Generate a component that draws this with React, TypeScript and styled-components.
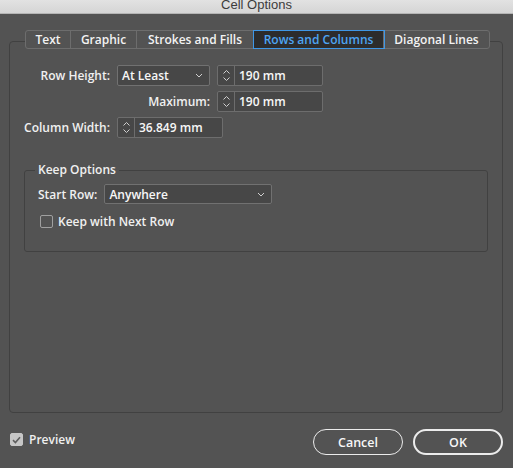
import React from "react";
import styled, { createGlobalStyle } from "styled-components";

const Global = createGlobalStyle`
  html, body { margin: 0; padding: 0; background: #535353; }
  body { font-family: "Open Sans", "Liberation Sans", sans-serif; font-size: 12px; color: #f2f2f2; }
  * { box-sizing: border-box; }
`;

const Dialog = styled.div`
  width: 513px;
  height: 468px;
  background: #535353;
  display: flex;
  flex-direction: column;
  overflow: hidden;
`;

const TitleBar = styled.div`
  height: 14px;
  background: linear-gradient(#e2e2e2, #d5d5d5);
  border-bottom: 1px solid #b5b5b5;
  display: flex;
  justify-content: center;
  overflow: hidden;
`;

const TitleText = styled.div`
  font-family: "Liberation Sans", sans-serif;
  font-size: 13px;
  line-height: 14px;
  color: #3c3c3c;
  margin-top: -2px;
`;

const Body = styled.div`
  padding: 16px 10px 0 9px;
  display: flex;
  flex-direction: column;
`;

const TabBar = styled.div`
  align-self: center;
  display: flex;
  height: 19px;
  border: 1px solid #6d6d6d;
  border-radius: 3px;
  background: #535353;
  position: relative;
  z-index: 1;
  margin-left: 3px;
`;

const Tab = styled.div<{ $w: number; $active?: boolean }>`
  width: ${(p) => p.$w}px;
  height: 17px;
  display: flex;
  align-items: center;
  justify-content: center;
  font-size: 12px;
  font-weight: 600;
  color: ${(p) => (p.$active ? "#4ea4f2" : "#f2f2f2")};
  background: ${(p) => (p.$active ? "#2c2c2c" : "transparent")};
  border-right: 1px solid #6d6d6d;
  box-shadow: ${(p) => (p.$active ? "0 0 0 1px #3f97e6" : "none")};
  &:last-child { border-right: none; }
`;

const Panel = styled.div`
  margin-top: -8px;
  height: 372px;
  border: 1px solid #414141;
  border-radius: 4px;
  padding: 23px 14px 0 14px;
  display: flex;
  flex-direction: column;
`;

const FieldRows = styled.div`
  display: flex;
  flex-direction: column;
  gap: 5px;
`;

const Row = styled.div`
  display: flex;
  align-items: center;
  gap: 5px;
  height: 21px;
`;

const Label = styled.div<{ $w?: number }>`
  width: ${(p) => (p.$w ? `${p.$w}px` : "auto")};
  text-align: right;
  padding-right: 2px;
  font-size: 12px;
  font-weight: 600;
  color: #f0f0f0;
  white-space: nowrap;
`;

const SelectBox = styled.div<{ $w: number; $h?: number }>`
  width: ${(p) => p.$w}px;
  height: ${(p) => p.$h ?? 21}px;
  background: #474747;
  border: 1px solid #717171;
  border-radius: 2px;
  display: flex;
  align-items: center;
  justify-content: space-between;
  padding: 0 6px 0 4px;
  font-size: 12px;
  font-weight: 600;
  color: #f7f7f7;
  margin-right: 2px;
`;

const SpinBox = styled.div<{ $w: number }>`
  width: ${(p) => p.$w}px;
  height: 21px;
  background: #474747;
  border: 1px solid #6d6d6d;
  border-radius: 2px;
  display: flex;
  align-items: stretch;
`;

const SpinArrows = styled.div`
  width: 17px;
  border-right: 1px solid #6d6d6d;
  display: flex;
  flex-direction: column;
  align-items: center;
  justify-content: center;
  gap: 3px;
`;

const SpinValue = styled.div`
  display: flex;
  align-items: center;
  padding-left: 4px;
  font-size: 12px;
  font-weight: 600;
  color: #f7f7f7;
`;

const Group = styled.fieldset`
  margin: 24px 0 0 0;
  padding: 0 14px 21px 13px;
  border: 1px solid #414141;
  border-radius: 3px;
  min-width: 0;
`;

const Legend = styled.legend`
  margin-left: -3px;
  padding: 0 3px;
  font-size: 12px;
  font-weight: 600;
  line-height: 16px;
  color: #f0f0f0;
`;

const GroupRow = styled.div<{ $mt: number; $gap: number }>`
  display: flex;
  align-items: center;
  margin-top: ${(p) => p.$mt}px;
  gap: ${(p) => p.$gap}px;
`;

const CheckBox = styled.div<{ $checked?: boolean }>`
  width: 13px;
  height: 13px;
  border-radius: 2px;
  border: 1px solid ${(p) => (p.$checked ? "#c6c6c6" : "#a0a0a0")};
  background: ${(p) => (p.$checked ? "#c6c6c6" : "transparent")};
  display: flex;
  align-items: center;
  justify-content: center;
  margin-left: 2px;
`;

const CheckLabel = styled.span`
  font-size: 12px;
  font-weight: 600;
  color: #f0f0f0;
`;

const Footer = styled.div`
  display: flex;
  align-items: flex-start;
  margin-top: 16px;
  padding-left: 1px;
`;

const Preview = styled.div`
  display: flex;
  align-items: center;
  gap: 6px;
  margin-top: 2px;
  margin-left: -2px;
`;

const Buttons = styled.div`
  margin-left: auto;
  display: flex;
  gap: 10px;
`;

const Button = styled.div<{ $primary?: boolean }>`
  width: 90px;
  height: 26px;
  border-radius: 13px;
  border: ${(p) => (p.$primary ? "2px" : "1.5px")} solid #ececec;
  display: flex;
  align-items: center;
  justify-content: center;
  font-size: 12.5px;
  font-weight: 600;
  color: #f7f7f7;
`;

const Chevron = () => (
  <svg width="8" height="5" viewBox="0 0 8 5">
    <path d="M1 1 L4 4 L7 1" fill="none" stroke="#d0d0d0" strokeWidth="1" />
  </svg>
);

const Spinner = ({ w, value }: { w: number; value: string }) => (
  <SpinBox $w={w}>
    <SpinArrows>
      <svg width="7" height="4" viewBox="0 0 7 4">
        <path d="M0.5 3.5 L3.5 0.5 L6.5 3.5" fill="none" stroke="#cfcfcf" strokeWidth="1" />
      </svg>
      <svg width="7" height="4" viewBox="0 0 7 4">
        <path d="M0.5 0.5 L3.5 3.5 L6.5 0.5" fill="none" stroke="#cfcfcf" strokeWidth="1" />
      </svg>
    </SpinArrows>
    <SpinValue>{value}</SpinValue>
  </SpinBox>
);

const tabs = [
  { label: "Text", w: 45 },
  { label: "Graphic", w: 66 },
  { label: "Strokes and Fills", w: 117 },
  { label: "Rows and Columns", w: 130, active: true },
  { label: "Diagonal Lines", w: 105 },
];

export default function App() {
  return (
    <>
      <Global />
      <Dialog>
        <TitleBar>
          <TitleText>Cell Options</TitleText>
        </TitleBar>
        <Body>
          <TabBar>
            {tabs.map((t) => (
              <Tab key={t.label} $w={t.w} $active={t.active}>
                {t.label}
              </Tab>
            ))}
          </TabBar>
          <Panel>
            <FieldRows>
              <Row>
                <Label $w={88}>Row Height:</Label>
                <SelectBox $w={93}>
                  <span>At Least</span>
                  <Chevron />
                </SelectBox>
                <Spinner w={106} value="190 mm" />
              </Row>
              <Row>
                <Label $w={188}>Maximum:</Label>
                <Spinner w={106} value="190 mm" />
              </Row>
              <Row>
                <Label $w={88}>Column Width:</Label>
                <Spinner w={106} value="36.849 mm" />
              </Row>
            </FieldRows>
            <Group>
              <Legend>Keep Options</Legend>
              <GroupRow $mt={6} $gap={5}>
                <Label>Start Row:</Label>
                <SelectBox $w={168} $h={20}>
                  <span>Anywhere</span>
                  <Chevron />
                </SelectBox>
              </GroupRow>
              <GroupRow $mt={9} $gap={5}>
                <CheckBox />
                <CheckLabel>Keep with Next Row</CheckLabel>
              </GroupRow>
            </Group>
          </Panel>
          <Footer>
            <Preview>
              <CheckBox $checked>
                <svg width="9" height="8" viewBox="0 0 9 8">
                  <path d="M1 4.2 L3.4 6.5 L8 1.2" fill="none" stroke="#5e5e5e" strokeWidth="1.6" />
                </svg>
              </CheckBox>
              <CheckLabel>Preview</CheckLabel>
            </Preview>
            <Buttons>
              <Button>Cancel</Button>
              <Button $primary>OK</Button>
            </Buttons>
          </Footer>
        </Body>
      </Dialog>
    </>
  );
}
